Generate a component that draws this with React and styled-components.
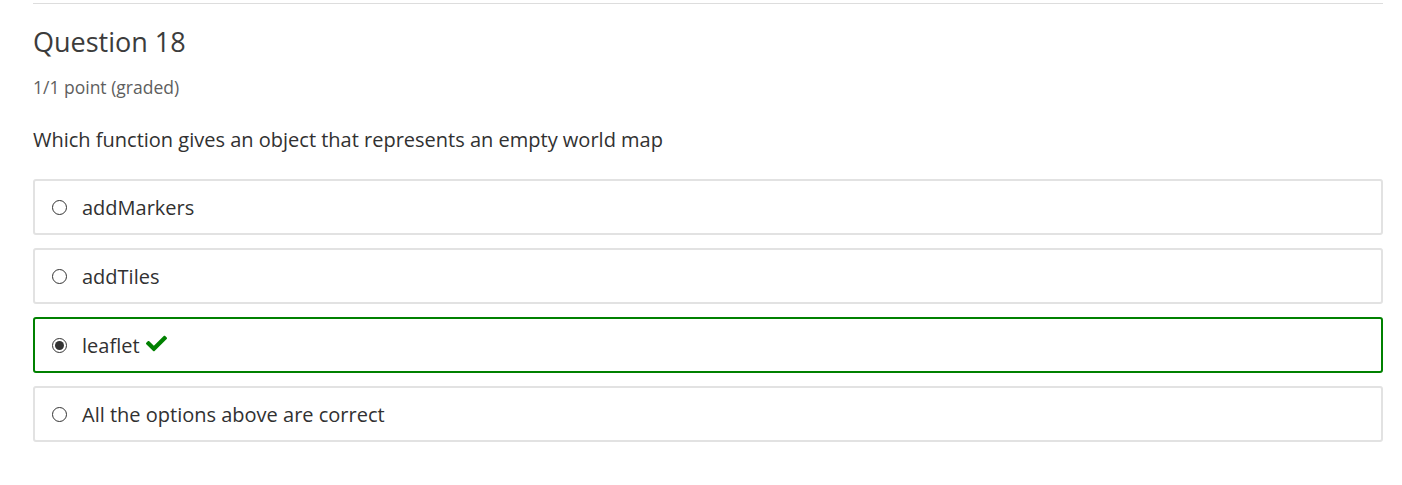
import React from "react";
import styled, { createGlobalStyle } from "styled-components";

const Global = createGlobalStyle`
  html, body { margin: 0; padding: 0; background: #fff; }
  body { font-family: "Open Sans", "Noto Sans", sans-serif; color: #313131; }
`;

const Problem = styled.section`
  margin: 3px 19px 0 33px;
  border-top: 1px solid #dddddd;
`;

const Title = styled.h3`
  margin: 22px 0 0;
  font-size: 27px;
  font-weight: 400;
  line-height: 32px;
  color: #3c3c3c;
`;

const Status = styled.div`
  margin-top: 17px;
  font-size: 17.5px;
  line-height: 24px;
  color: #5e5e5e;
`;

const Prompt = styled.p`
  margin: 26px 0 24px;
  font-size: 20px;
  line-height: 30px;
  color: #313131;
`;

const Options = styled.div`
  display: flex;
  flex-direction: column;
  gap: 13px;
`;

const Option = styled.label`
  display: flex;
  align-items: center;
  height: 56px;
  box-sizing: border-box;
  padding: 0 16px;
  border: 2px solid ${(p) => (p.$correct ? "#008100" : "#e2e2e2")};
  border-radius: 3px;
  font-size: 20px;
  color: #313131;
`;

const Radio = styled.span`
  box-sizing: border-box;
  width: 15px;
  height: 15px;
  border-radius: 50%;
  border: 1px solid #333;
  margin: 0 15px 0 1px;
  display: flex;
  align-items: center;
  justify-content: center;
  flex: none;
  &::after {
    content: "";
    display: ${(p) => (p.$checked ? "block" : "none")};
    width: 9px;
    height: 9px;
    border-radius: 50%;
    background: #333;
  }
`;

const Check = styled.svg`
  width: 21px;
  height: 21px;
  margin-left: 6px;
  margin-top: -3px;
  fill: #008100;
`;

const options = [
  { text: "addMarkers" },
  { text: "addTiles" },
  { text: "leaflet", checked: true, correct: true },
  { text: "All the options above are correct" },
];

export default function App() {
  return (
    <>
      <Global />
      <Problem>
        <Title>Question 18</Title>
        <Status>1/1 point (graded)</Status>
        <Prompt>Which function gives an object that represents an empty world map</Prompt>
        <Options>
          {options.map((o) => (
            <Option key={o.text} $correct={o.correct}>
              <Radio $checked={o.checked} />
              {o.text}
              {o.correct && (
                <Check viewBox="0 0 512 512">
                  <path d="M173.9 439.4l-166.4-166.4c-10-10-10-26.2 0-36.2l36.2-36.2c10-10 26.2-10 36.2 0L192 312.7 432.1 72.6c10-10 26.2-10 36.2 0l36.2 36.2c10 10 10 26.2 0 36.2l-294.4 294.4c-10 10-26.2 10-36.2 0z" />
                </Check>
              )}
            </Option>
          ))}
        </Options>
      </Problem>
    </>
  );
}
